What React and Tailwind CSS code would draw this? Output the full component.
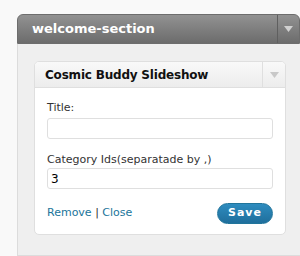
import React from 'react';

const Arrow = ({ color }) => (
  <svg width="9" height="6" viewBox="0 0 9 6">
    <path d="M0 0 H9 L4.5 6 Z" fill={color} />
  </svg>
);

export default function App() {
  return (
    <div className="w-[300px] h-[256px] overflow-hidden bg-[#f9f9f9] pt-[14px] pl-[17px] font-['DejaVu_Sans',Verdana,sans-serif]">
      {/* Sidebar holder */}
      <div className="w-[283px]">
        <div className="h-[30px] flex items-stretch rounded-t-[6px] border border-[#6d6d6d] bg-gradient-to-b from-[#929292] to-[#6c6c6c]">
          <div className="flex-1 flex items-center pl-[14px] text-white text-[13px] font-bold">welcome-section</div>
          <div className="w-[22px] border-l border-[#5f5f5f] flex items-center justify-center">
            <Arrow color="#d0d0d0" />
          </div>
        </div>
        <div className="h-[212px] bg-[#efefef] border-l border-b border-[#dcdcdc] pt-[17px] pl-[16px] pr-[14px]">
          {/* Widget */}
          <div className="rounded-[5px] border border-[#dfdfdf] bg-white overflow-hidden">
            <div className="h-[26px] flex items-stretch bg-gradient-to-b from-[#f9f9f9] to-[#ececec] border-b border-[#dfdfdf]">
              <div className="flex-1 flex items-center pl-[10px] text-[12px] tracking-[-0.2px] font-bold text-[#111]">Cosmic Buddy Slideshow</div>
              <div className="w-[23px] border-l border-[#dfdfdf] flex items-center justify-center">
                <Arrow color="#c8c8c8" />
              </div>
            </div>
            <div className="px-[12px] pt-[13px] pb-[10px] text-[11px] text-[#333]">
              <div className="leading-[14px]">Title:</div>
              <div className="mt-[3px] h-[21px] rounded-[3px] border border-[#dfdfdf] bg-white"></div>
              <div className="mt-[14px] leading-[14px]">Category Ids(separatade by ,)</div>
              <div className="mt-[1px] h-[21px] rounded-[3px] border border-[#dfdfdf] bg-white flex items-center px-[3px] text-[12px] text-black">3</div>
              <div className="mt-[14px] flex items-center justify-between">
                <div className="text-[#21759b]">
                  Remove <span className="text-[#333]">|</span> Close
                </div>
                <div className="w-[56px] h-[21px] rounded-full bg-gradient-to-b from-[#2e8cbf] to-[#1f6f9c] border border-[#21759b] flex items-center justify-center text-white text-[11px] font-bold tracking-[1px]">
                  Save
                </div>
              </div>
            </div>
          </div>
        </div>
      </div>
    </div>
  );
}
